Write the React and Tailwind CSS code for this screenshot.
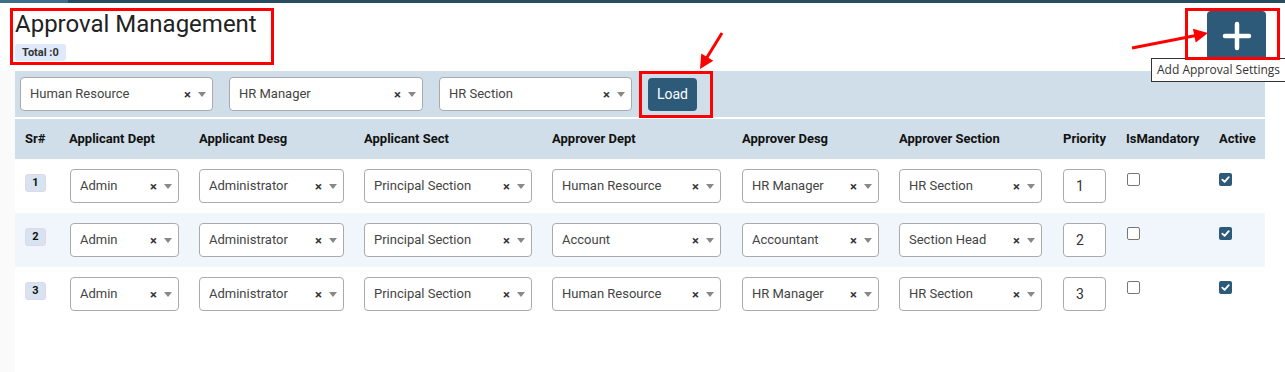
import React from "react";

const rows = [
  {
    sr: 1,
    cells: ["Admin", "Administrator", "Principal Section", "Human Resource", "HR Manager", "HR Section"],
    priority: "1",
  },
  {
    sr: 2,
    cells: ["Admin", "Administrator", "Principal Section", "Account", "Accountant", "Section Head"],
    priority: "2",
  },
  {
    sr: 3,
    cells: ["Admin", "Administrator", "Principal Section", "Human Resource", "HR Manager", "HR Section"],
    priority: "3",
  },
];

const selectWidths = ["w-[109px]", "w-[145px]", "w-[168px]", "w-[169px]", "w-[137px]", "w-[143px]"];

const headers = [
  "Sr#",
  "Applicant Dept",
  "Applicant Desg",
  "Applicant Sect",
  "Approver Dept",
  "Approver Desg",
  "Approver Section",
  "Priority",
  "IsMandatory",
  "Active",
];

const gridCols =
  "grid grid-cols-[54px_130px_165px_188px_190px_157px_164px_63px_93px_46px]";

const Select = ({ value, width }) => (
  <div
    className={`${width} h-[34px] flex items-center bg-white border border-[#aaaaaa] rounded-[4px] pl-[9px] pr-[6px]`}
  >
    <span className="flex-1 text-[13px] text-[#444] truncate">{value}</span>
    <span className="text-[13px] font-bold text-[#333] leading-none mr-[7px]">×</span>
    <span className="w-0 h-0 border-l-[4px] border-r-[4px] border-t-[5px] border-l-transparent border-r-transparent border-t-[#888]" />
  </div>
);

const Checkbox = ({ checked }) =>
  checked ? (
    <div className="w-[13px] h-[13px] rounded-[2px] bg-[#2c5a78] flex items-center justify-center">
      <svg width="9" height="9" viewBox="0 0 10 10">
        <path d="M1.5 5.2 L4 7.6 L8.6 2.4" stroke="white" strokeWidth="2" fill="none" strokeLinecap="round" strokeLinejoin="round" />
      </svg>
    </div>
  ) : (
    <div className="w-[13px] h-[13px] rounded-[2px] bg-white border border-[#767676]" />
  );

const App = () => {
  return (
    <div className="relative w-[1285px] h-[372px] bg-white overflow-hidden font-['Roboto',sans-serif]">
      {/* top strip */}
      <div className="flex h-[3px]">
        <div className="w-[68px] bg-[#3f6d88]" />
        <div className="flex-1 bg-[#284b62]" />
      </div>

      <div className="flex h-[369px]">
        <div className="w-[15px] bg-[#fafafa] mt-[67px]" />
        <div className="w-[1250px]">
          {/* header */}
          <div className="flex justify-between h-[68px]">
            <div className="pt-[6px]">
              <h1 className="text-[24px] leading-[30px] text-[#222]">Approval Management</h1>
              <span className="inline-block mt-[5px] px-[7px] h-[17px] leading-[17px] rounded-[3px] bg-[#dfe9f9] text-[11px] font-bold text-[#333]">
                Total :0
              </span>
            </div>
            <button className="mt-[8px] mr-[-1px] w-[59px] h-[50px] rounded-[4px] bg-[#2c5a78] flex items-center justify-center">
              <svg width="30" height="30" viewBox="0 0 30 30">
                <path d="M15 3 V27 M3 15 H27" stroke="white" strokeWidth="4.5" strokeLinecap="round" />
              </svg>
            </button>
          </div>

          {/* filter bar */}
          <div className="h-[46px] bg-[#cfdee8] flex items-center pl-[5px] gap-[16px]">
            <Select value="Human Resource" width="w-[193px]" />
            <Select value="HR Manager" width="w-[194px]" />
            <Select value="HR Section" width="w-[193px]" />
            <button className="w-[49px] h-[33px] rounded-[4px] bg-[#2c5a78] text-white text-[14px]">
              Load
            </button>
          </div>

          {/* table */}
          <div className="mt-[2px]">
            <div className={`${gridCols} h-[40px] items-center bg-[#cfdee8] text-[13px] font-bold text-[#111]`}>
              {headers.map((h, i) => (
                <div key={h} className={i === 0 ? "pl-[10px]" : ""}>
                  {h}
                </div>
              ))}
            </div>
            {rows.map((r, ri) => (
              <div
                key={r.sr}
                className={`${gridCols} h-[54px] items-start pt-[10px] ${ri === 1 ? "bg-[#f1f6fd]" : "bg-white"}`}
              >
                <div className="pl-[10px]">
                  <span className="inline-flex w-[21px] h-[18px] items-center justify-center rounded-[3px] bg-[#d7e3ef] border border-[#e2d6ef] text-[11px] font-bold text-[#111]">
                    {r.sr}
                  </span>
                </div>
                {r.cells.map((c, ci) => (
                  <div key={ci} className={ci === 0 ? "pl-[1px]" : ""}>
                    <Select value={c} width={selectWidths[ci]} />
                  </div>
                ))}
                <div>
                  <div className="w-[43px] h-[34px] border border-[#aaaaaa] rounded-[4px] bg-white flex items-center pl-[12px] text-[14px] text-[#333]">
                    {r.priority}
                  </div>
                </div>
                <div className="pl-[1px] pt-[4px]">
                  <Checkbox checked={false} />
                </div>
                <div className="pt-[4px]">
                  <Checkbox checked={true} />
                </div>
              </div>
            ))}
          </div>
        </div>
      </div>

      {/* tooltip */}
      <div className="absolute left-[1151px] top-[58px] h-[24px] px-[5px] bg-white border border-[#333] flex items-center text-[12px] text-[#333] font-['Open_Sans',sans-serif] whitespace-nowrap">
        Add Approval Settings
      </div>

      {/* annotation boxes */}
      <div className="absolute left-[10px] top-[8px] w-[264px] h-[57px] border-[3px] border-[#ff0000]" />
      <div className="absolute left-[639px] top-[71px] w-[74px] h-[47px] border-[3px] border-[#ff0000]" />
      <div className="absolute left-[1185px] top-[8px] w-[95px] h-[52px] border-[3px] border-[#ff0000]" />

      {/* arrows */}
      <svg className="absolute left-0 top-0 pointer-events-none" width="1285" height="372">
        <line x1="722" y1="33" x2="706" y2="59" stroke="#ff0000" strokeWidth="3" />
        <polygon points="700,69 713.3,60.7 701.3,53.5" fill="#ff0000" />
        <line x1="1132" y1="48" x2="1196" y2="35.5" stroke="#ff0000" strokeWidth="3" />
        <polygon points="1208,33 1195.7,42.6 1192.9,28.8" fill="#ff0000" />
      </svg>
    </div>
  );
};

export default App;
